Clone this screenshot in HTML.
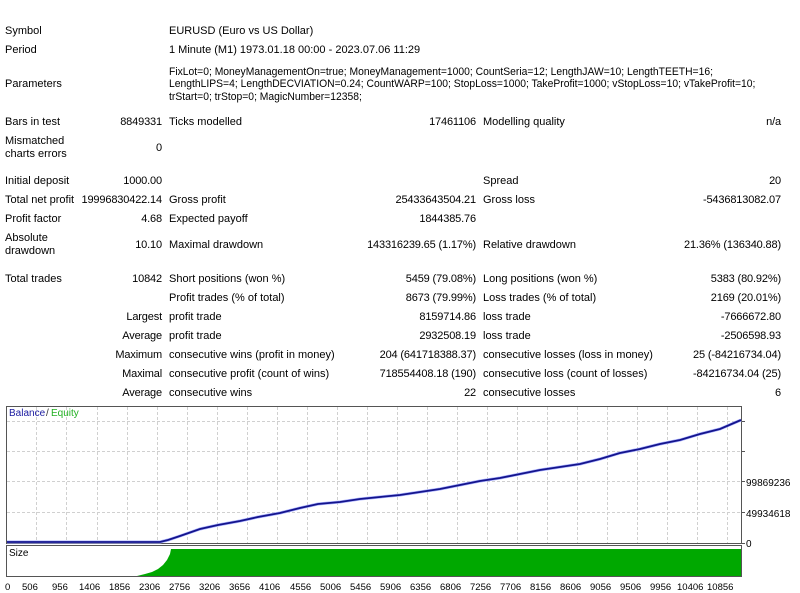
<!DOCTYPE html>
<html><head><meta charset="utf-8"><style>
body{margin:0;width:800px;height:593px;background:#fff;font-family:"Liberation Sans",Tahoma,sans-serif;font-size:11px;color:#000;position:relative;overflow:hidden}
.t{position:absolute;white-space:nowrap;line-height:13px}
.r{position:absolute;white-space:nowrap;line-height:13px;text-align:right;letter-spacing:-0.15px}
.p{transform:scaleX(0.94);transform-origin:0 0}
</style></head><body>
<div class="t" style="left:5px;top:25px">Symbol</div>
<div class="t" style="left:169px;top:25px">EURUSD (Euro vs US Dollar)</div>
<div class="t" style="left:5px;top:44px">Period</div>
<div class="t" style="left:169px;top:44px">1 Minute (M1) 1973.01.18 00:00 - 2023.07.06 11:29</div>
<div class="t" style="left:5px;top:78px">Parameters</div>
<div class="t p" style="left:169px;top:66px">FixLot=0; MoneyManagementOn=true; MoneyManagement=1000; CountSeria=12; LengthJAW=10; LengthTEETH=16;</div>
<div class="t p" style="left:169px;top:78px">LengthLIPS=4; LengthDECVIATION=0.24; CountWARP=100; StopLoss=1000; TakeProfit=1000; vStopLoss=10; vTakeProfit=10;</div>
<div class="t p" style="left:169px;top:91px">trStart=0; trStop=0; MagicNumber=12358;</div>

<div class="t" style="left:5px;top:116px">Bars in test</div>
<div class="r" style="right:638px;top:116px">8849331</div>
<div class="t" style="left:169px;top:116px">Ticks modelled</div>
<div class="r" style="right:324px;top:116px">17461106</div>
<div class="t" style="left:483px;top:116px">Modelling quality</div>
<div class="r" style="right:19px;top:116px">n/a</div>

<div class="t" style="left:5px;top:135px">Mismatched<br>charts errors</div>
<div class="r" style="right:638px;top:142px">0</div>

<div class="t" style="left:5px;top:175px">Initial deposit</div>
<div class="r" style="right:638px;top:175px">1000.00</div>
<div class="t" style="left:483px;top:175px">Spread</div>
<div class="r" style="right:19px;top:175px">20</div>

<div class="t" style="left:5px;top:194px">Total net profit</div>
<div class="r" style="right:638px;top:194px">19996830422.14</div>
<div class="t" style="left:169px;top:194px">Gross profit</div>
<div class="r" style="right:324px;top:194px">25433643504.21</div>
<div class="t" style="left:483px;top:194px">Gross loss</div>
<div class="r" style="right:19px;top:194px">-5436813082.07</div>

<div class="t" style="left:5px;top:213px">Profit factor</div>
<div class="r" style="right:638px;top:213px">4.68</div>
<div class="t" style="left:169px;top:213px">Expected payoff</div>
<div class="r" style="right:324px;top:213px">1844385.76</div>

<div class="t" style="left:5px;top:232px">Absolute<br>drawdown</div>
<div class="r" style="right:638px;top:239px">10.10</div>
<div class="t" style="left:169px;top:239px">Maximal drawdown</div>
<div class="r" style="right:324px;top:239px">143316239.65 (1.17%)</div>
<div class="t" style="left:483px;top:239px">Relative drawdown</div>
<div class="r" style="right:19px;top:239px">21.36% (136340.88)</div>

<div class="t" style="left:5px;top:273px">Total trades</div>
<div class="r" style="right:638px;top:273px">10842</div>
<div class="t" style="left:169px;top:273px">Short positions (won %)</div>
<div class="r" style="right:324px;top:273px">5459 (79.08%)</div>
<div class="t" style="left:483px;top:273px">Long positions (won %)</div>
<div class="r" style="right:19px;top:273px">5383 (80.92%)</div>

<div class="t" style="left:169px;top:292px">Profit trades (% of total)</div>
<div class="r" style="right:324px;top:292px">8673 (79.99%)</div>
<div class="t" style="left:483px;top:292px">Loss trades (% of total)</div>
<div class="r" style="right:19px;top:292px">2169 (20.01%)</div>

<div class="r" style="right:638px;top:311px">Largest</div>
<div class="t" style="left:169px;top:311px">profit trade</div>
<div class="r" style="right:324px;top:311px">8159714.86</div>
<div class="t" style="left:483px;top:311px">loss trade</div>
<div class="r" style="right:19px;top:311px">-7666672.80</div>

<div class="r" style="right:638px;top:330px">Average</div>
<div class="t" style="left:169px;top:330px">profit trade</div>
<div class="r" style="right:324px;top:330px">2932508.19</div>
<div class="t" style="left:483px;top:330px">loss trade</div>
<div class="r" style="right:19px;top:330px">-2506598.93</div>

<div class="r" style="right:638px;top:349px">Maximum</div>
<div class="t" style="left:169px;top:349px">consecutive wins (profit in money)</div>
<div class="r" style="right:324px;top:349px">204 (641718388.37)</div>
<div class="t" style="left:483px;top:349px">consecutive losses (loss in money)</div>
<div class="r" style="right:19px;top:349px">25 (-84216734.04)</div>

<div class="r" style="right:638px;top:368px">Maximal</div>
<div class="t" style="left:169px;top:368px">consecutive profit (count of wins)</div>
<div class="r" style="right:324px;top:368px">718554408.18 (190)</div>
<div class="t" style="left:483px;top:368px">consecutive loss (count of losses)</div>
<div class="r" style="right:19px;top:368px">-84216734.04 (25)</div>

<div class="r" style="right:638px;top:387px">Average</div>
<div class="t" style="left:169px;top:387px">consecutive wins</div>
<div class="r" style="right:324px;top:387px">22</div>
<div class="t" style="left:483px;top:387px">consecutive losses</div>
<div class="r" style="right:19px;top:387px">6</div>

<svg style="position:absolute;left:0;top:0" width="800" height="593" font-family="Liberation Sans, Tahoma, sans-serif" font-size="10">
<rect x="6.5" y="406.5" width="735" height="137" fill="#fff" stroke="#555"/>
<g stroke="#d0d0d0" stroke-dasharray="3,2">
<path d="M7 421.5H741M7 451.5H741M7 481.5H741M7 512.5H741"/>
<path d="M36.5 407V543M66.5 407V543M97.5 407V543M127.5 407V543M157.5 407V543M187.5 407V543M217.5 407V543M247.5 407V543M277.5 407V543M307.5 407V543M337.5 407V543M367.5 407V543M397.5 407V543M427.5 407V543M457.5 407V543M487.5 407V543M517.5 407V543M547.5 407V543M577.5 407V543M607.5 407V543M637.5 407V543M667.5 407V543M697.5 407V543M727.5 407V543"/>
<path d="M36.5 547V576M66.5 547V576M97.5 547V576M127.5 547V576M157.5 547V576"/>
</g>
<text x="9" y="416" fill="#1a1aa0">Balance</text><text x="46" y="416" fill="#333">/</text><text x="51" y="416" fill="#22b022">Equity</text>
<polyline fill="none" stroke="#a8b0ff" stroke-width="3" points="7,542 160,542 168,540 180,536 200,529 218,525 240,521 258,517 280,513 300,508 318,504 340,502 360,499 380,497 400,495 420,492 440,489 460,485 480,481 500,478 520,474 540,470 560,467 580,464 600,459 620,453 640,449 660,444 680,440 700,434 720,429 741,420"/>
<polyline fill="none" stroke="#14148c" stroke-width="1.8" points="7,542 160,542 168,540 180,536 200,529 218,525 240,521 258,517 280,513 300,508 318,504 340,502 360,499 380,497 400,495 420,492 440,489 460,485 480,481 500,478 520,474 540,470 560,467 580,464 600,459 620,453 640,449 660,444 680,440 700,434 720,429 741,420"/>
<g fill="#000" font-size="10"><text x="746" y="486">99869236</text><text x="746" y="517">49934618</text><text x="746" y="547">0</text></g>
<g stroke="#555"><path d="M742 421.5h3M742 451.5h3M742 481.5h3M742 512.5h3M742 543.5h3"/></g>
<rect x="6.5" y="545.5" width="735" height="31" fill="#fff" stroke="#555"/>
<path d="M137 576 L145 574 L152 572 L158 569 L163 565 L167 560 L170 554 L171 549 L741 549 L741 576 Z" fill="#00a800"/>
<text x="9" y="556" fill="#000">Size</text>
<g fill="#000" font-size="9.5">
<text x="5" y="590">0</text><text x="22" y="590">506</text><text x="52" y="590">956</text><text x="79" y="590">1406</text><text x="109" y="590">1856</text><text x="139" y="590">2306</text><text x="169" y="590">2756</text><text x="199" y="590">3206</text><text x="229" y="590">3656</text><text x="259" y="590">4106</text><text x="290" y="590">4556</text><text x="320" y="590">5006</text><text x="350" y="590">5456</text><text x="380" y="590">5906</text><text x="410" y="590">6356</text><text x="440" y="590">6806</text><text x="470" y="590">7256</text><text x="500" y="590">7706</text><text x="530" y="590">8156</text><text x="560" y="590">8606</text><text x="590" y="590">9056</text><text x="620" y="590">9506</text><text x="650" y="590">9956</text><text x="677" y="590">10406</text><text x="707" y="590">10856</text>
</g>
</svg>
</body></html>
